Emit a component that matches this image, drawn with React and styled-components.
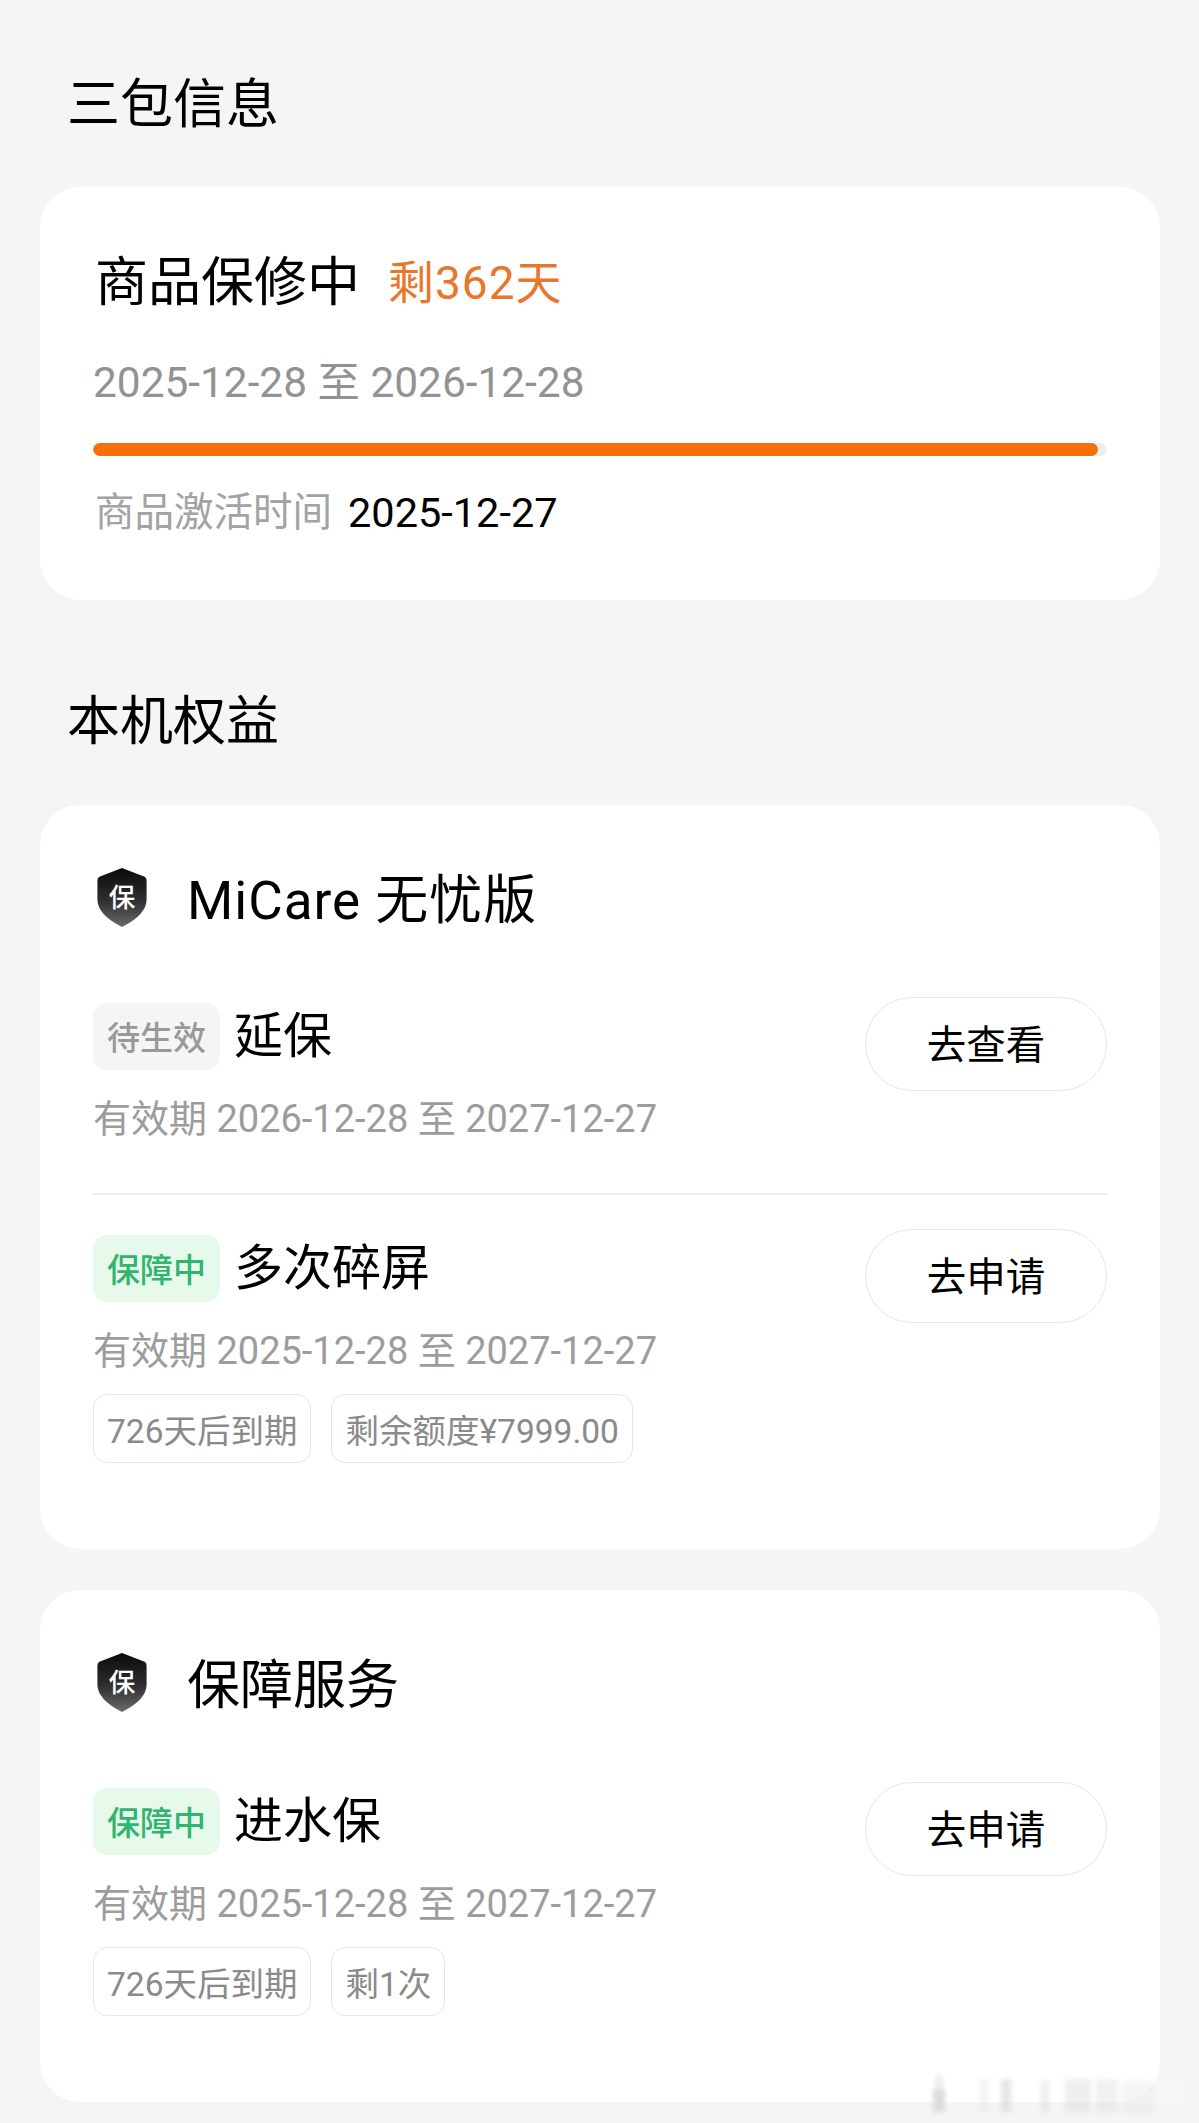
import React from 'react';
import styled, { createGlobalStyle } from 'styled-components';

const GlobalStyle = createGlobalStyle`
  html, body {
    margin: 0;
    padding: 0;
    background: #f5f5f5;
  }
  * {
    box-sizing: border-box;
  }
  body {
    font-family: "Roboto", "Noto Sans CJK SC", sans-serif;
    color: #000;
  }
`;

const Page = styled.div`
  position: relative;
  width: 1199px;
  height: 2123px;
  padding: 75px 39px 0 40px;
  overflow: hidden;
`;

const SectionTitle = styled.h2`
  margin: ${(p) => p.$top || 0}px 0 ${(p) => p.$bottom || 52}px 27px;
  font-size: 53px;
  line-height: 60px;
  font-weight: 400;
`;

const Card = styled.section`
  background: #fff;
  border-radius: 40px;
  padding: ${(p) => p.$pad || '62px 53px 86px'};
  margin-bottom: 41px;
`;

const StatusLine = styled.div`
  display: flex;
  align-items: center;
  height: 60px;
  padding-left: 2px;
  gap: 28px;
`;

const StatusText = styled.span`
  font-size: 53px;
  line-height: 60px;
`;

const Remaining = styled.span`
  font-size: 46px;
  line-height: 60px;
  letter-spacing: 1px;
  color: #e8772e;
`;

const DateLine = styled.div`
  margin-top: 45px;
  font-size: 42.4px;
  line-height: 50px;
  color: #929292;
`;

const Track = styled.div`
  margin-top: 35px;
  height: 13px;
  background: #eeeeee;
  border-radius: 7px;
  overflow: hidden;
`;

const Fill = styled.div`
  height: 100%;
  background: #f56f0a;
  border-radius: 7px;
`;

const ActivatedLine = styled.div`
  margin-top: 32px;
  padding-left: 2px;
  display: flex;
  gap: 16px;
  font-size: 39.5px;
  line-height: 50px;
  color: #a3a3a3;
`;

const ActivatedDate = styled.span`
  font-size: 41.5px;
  color: #000;
`;

const CardHeader = styled.div`
  display: flex;
  align-items: center;
  gap: 39px;
  height: 60px;
  padding-left: 3px;
  margin-bottom: 70px;
`;

const HeaderTitle = styled.h3`
  margin: 0;
  padding-top: 7px;
  font-size: 53px;
  line-height: 60px;
  font-weight: 400;
  letter-spacing: ${(p) => (p.$latin ? '1px' : '0')};
`;

const Row = styled.div`
  display: flex;
  justify-content: space-between;
  align-items: flex-start;
`;

const RowBody = styled.div`
  padding-top: 6px;
`;

const NameLine = styled.div`
  display: flex;
  align-items: center;
  gap: 14px;
`;

const Pill = styled.span`
  display: flex;
  align-items: center;
  justify-content: center;
  width: 127px;
  height: 67px;
  padding-bottom: 2px;
  border-radius: 14px;
  font-size: 33px;
  font-weight: 500;
  background: ${(p) => (p.$active ? '#e6f9ea' : '#f5f5f5')};
  color: ${(p) => (p.$active ? '#2fb56f' : '#999999')};
`;

const Name = styled.span`
  font-size: 49px;
  line-height: 60px;
`;

const Validity = styled.div`
  margin-top: 24px;
  font-size: 38px;
  line-height: 50px;
  color: #9c9c9c;
  white-space: nowrap;
`;

const Chips = styled.div`
  display: flex;
  gap: 20px;
  margin-top: 18px;
`;

const Chip = styled.span`
  display: flex;
  align-items: center;
  height: 69px;
  padding: 0 13px;
  border: 1px solid #e6e6e6;
  border-radius: 14px;
  font-size: 33.5px;
  color: #8a8a8a;
`;

const ActionButton = styled.button`
  width: 242px;
  height: 94px;
  padding: 0 0 6px;
  background: #fff;
  border: 1px solid #e6e6e6;
  border-radius: 47px;
  font-family: inherit;
  font-size: 39.5px;
  color: #000;
`;

const Divider = styled.hr`
  margin: 49px 0 34px;
  border: none;
  border-top: 2px solid #eeeeee;
`;

const Watermark = styled.svg`
  position: absolute;
  left: 920px;
  top: 2065px;
  filter: blur(2.5px);
`;

const ShieldIcon = ({ id }) => (
  <svg width="52" height="59" viewBox="0 0 52 60">
    <defs>
      <linearGradient id={id} x1="0" y1="0" x2="0" y2="1">
        <stop offset="0" stopColor="#0a0a0a" />
        <stop offset="0.55" stopColor="#2e2e2e" />
        <stop offset="1" stopColor="#6a6a6a" />
      </linearGradient>
    </defs>
    <path
      d="M26 0 L49 9 Q51 10 51 13 L51 32 Q51 47 27 59.5 Q26 60 25 59.5 Q1 47 1 32 L1 13 Q1 10 3 9 Z"
      fill={`url(#${id})`}
    />
    <text
      x="26"
      y="40"
      textAnchor="middle"
      fontSize="27"
      fontWeight="500"
      fill="#fff"
      fontFamily="'Noto Sans CJK SC', sans-serif"
    >
      保
    </text>
  </svg>
);

const Benefit = ({ active, status, name, validity, action, chips }) => (
  <Row>
    <RowBody>
      <NameLine>
        <Pill $active={active}>{status}</Pill>
        <Name>{name}</Name>
      </NameLine>
      <Validity>{validity}</Validity>
      {chips && (
        <Chips>
          {chips.map((chip) => (
            <Chip key={chip}>{chip}</Chip>
          ))}
        </Chips>
      )}
    </RowBody>
    <ActionButton>{action}</ActionButton>
  </Row>
);

export default function App() {
  return (
    <Page>
      <GlobalStyle />
      <SectionTitle $bottom={52}>三包信息</SectionTitle>
      <Card $pad="66px 53px 62px">
        <StatusLine>
          <StatusText>商品保修中</StatusText>
          <Remaining>剩362天</Remaining>
        </StatusLine>
        <DateLine>2025-12-28 至 2026-12-28</DateLine>
        <Track>
          <Fill style={{ width: `${(362 / 365) * 100 - 0.1}%` }} />
        </Track>
        <ActivatedLine>
          商品激活时间
          <ActivatedDate>2025-12-27</ActivatedDate>
        </ActivatedLine>
      </Card>

      <SectionTitle $top={92} $bottom={53}>本机权益</SectionTitle>
      <Card>
        <CardHeader>
          <ShieldIcon id="shield-a" />
          <HeaderTitle $latin>MiCare 无忧版</HeaderTitle>
        </CardHeader>
        <Benefit
          status="待生效"
          name="延保"
          validity="有效期 2026-12-28 至 2027-12-27"
          action="去查看"
        />
        <Divider />
        <Benefit
          active
          status="保障中"
          name="多次碎屏"
          validity="有效期 2025-12-28 至 2027-12-27"
          action="去申请"
          chips={['726天后到期', '剩余额度¥7999.00']}
        />
      </Card>

      <Card>
        <CardHeader>
          <ShieldIcon id="shield-b" />
          <HeaderTitle>保障服务</HeaderTitle>
        </CardHeader>
        <Benefit
          active
          status="保障中"
          name="进水保"
          validity="有效期 2025-12-28 至 2027-12-27"
          action="去申请"
          chips={['726天后到期', '剩1次']}
        />
      </Card>

      <Watermark width="275" height="55" viewBox="0 0 275 55">
        <g fill="#dcdcdc">
          <rect x="13" y="24" width="12" height="23" />
          <rect x="15" y="10" width="8" height="20" opacity="0.5" />
          <rect x="60" y="14" width="8" height="33" opacity="0.35" />
          <rect x="81" y="14" width="10" height="33" opacity="0.7" />
          <rect x="121" y="16" width="8" height="31" opacity="0.5" />
          <rect x="145" y="14" width="26" height="33" opacity="0.45" />
          <rect x="176" y="14" width="22" height="33" opacity="0.4" />
          <rect x="202" y="16" width="32" height="31" opacity="0.35" />
        </g>
        <g fill="#fff" opacity="0.85">
          <rect x="200" y="18" width="67" height="2" />
          <rect x="200" y="28" width="67" height="2" />
          <rect x="200" y="37" width="67" height="2" />
        </g>
      </Watermark>
    </Page>
  );
}
